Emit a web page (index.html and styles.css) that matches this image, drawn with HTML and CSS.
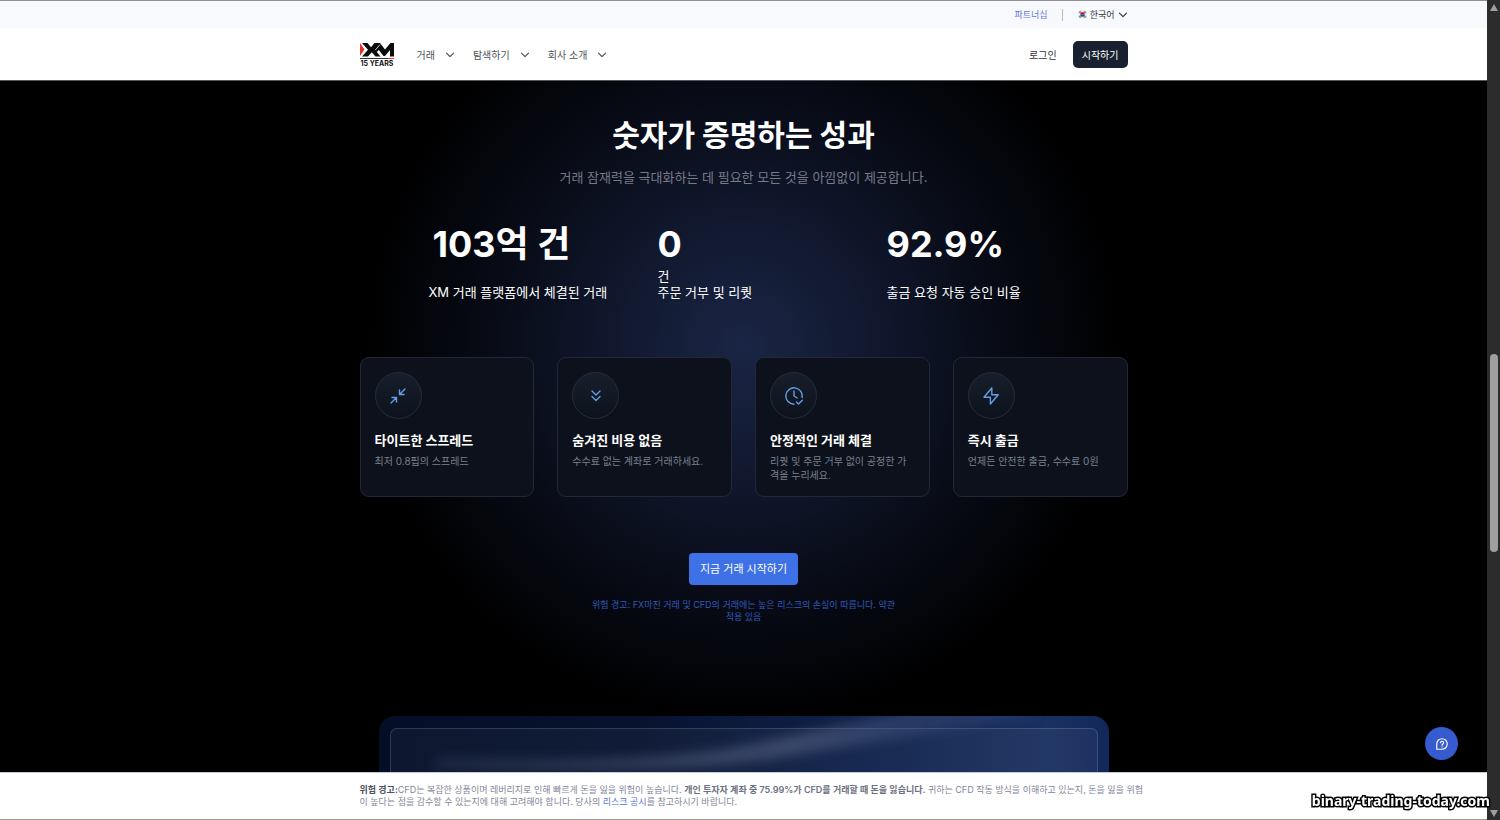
FILE: index.html
```
<!DOCTYPE html>
<html lang="ko">
<head>
<meta charset="utf-8">
<meta name="viewport" content="width=device-width, initial-scale=1">
<title>XM</title>
<link rel="stylesheet" href="styles.css">
</head>
<body>
<div class="page">
  <div class="topbar">
    <div class="container topbar-inner">
      <a class="partner" href="#">파트너십</a>
      <span class="divider"></span>
      <button class="language" type="button">
        <svg class="flag" viewBox="0 0 20 20" aria-hidden="true">
          <circle cx="10" cy="10" r="10" fill="#f0f0f0"/>
          <g stroke="#222" stroke-width="1.3"><path d="M2 6l3-4M3.6 7.2l3-4M5.2 8.4l3-4M12 4.4l3 4M13.500 3.200l3 4M15 2l3 4M2 14l3 4M3.600 12.800l3 4M5.200 11.600l3 4M12 15.600l3-4M13.500 16.800l3-4M15 18l3-4"/></g>
          <circle cx="10" cy="10" r="5" fill="#f0f0f0"/>
          <path d="M5 10a5 5 0 0 1 10 0z" fill="#d80027"/>
          <path d="M5 10a5 5 0 0 0 10 0z" fill="#0052b4"/>
        </svg>
        한국어
        <svg class="chevron" viewBox="0 0 10 10" aria-hidden="true"><path d="M1.500 3.200L5 6.700l3.500-3.500"/></svg>
      </button>
    </div>
  </div>

  <header class="header">
    <div class="container header-inner">
      <a class="logo" href="#" aria-label="XM">
        <svg class="logo-mark" viewBox="0 0 35 18" aria-hidden="true">
          <path d="M0 1l4.500 6.500L0 14z" fill="#e5322b"/>
          <path d="M2 1h5.500l3.500 4.200L14.500 1H20l5 6.500L30.500 1H34v13.500h-4V8l-5 6h-1.500L18.800 8l-2 2 3.700 4.500H15.500l-3.700-4.200L8 14.500H2l6-6.700z" fill="#0b0b0b"/>
          <path d="M15.200 8.200L20 2.500" fill="none" stroke="#fff" stroke-width=".8"/>
          <path d="M0 16.500h28" stroke="#333"/><path d="M28 16.500h6" stroke="#e5322b"/>
        </svg>
        <span class="logo-years">15 YEARS</span>
      </a>
      <nav class="nav">
        <button type="button">거래<svg class="chevron" viewBox="0 0 10 10" aria-hidden="true"><path d="M1.500 3.200L5 6.700l3.500-3.500"/></svg></button>
        <button type="button">탐색하기<svg class="chevron" viewBox="0 0 10 10" aria-hidden="true"><path d="M1.500 3.200L5 6.700l3.500-3.500"/></svg></button>
        <button type="button">회사 소개<svg class="chevron" viewBox="0 0 10 10" aria-hidden="true"><path d="M1.500 3.200L5 6.700l3.500-3.500"/></svg></button>
      </nav>
      <a class="login" href="#">로그인</a>
      <button class="start" type="button">시작하기</button>
    </div>
  </header>

  <main class="main">
    <div class="container">
      <h1 class="title">숫자가 증명하는 성과</h1>
      <p class="subtitle">거래 잠재력을 극대화하는 데 필요한 모든 것을 아낌없이 제공합니다.</p>

      <div class="stats">
        <div class="stat"><strong class="count">103억 건</strong><span class="label">XM 거래 플랫폼에서 체결된 거래</span></div>
        <div class="stat"><strong>0</strong><span>건</span><span class="label">주문 거부 및 리퀏</span></div>
        <div class="stat"><strong>92.9%</strong><span class="label">출금 요청 자동 승인 비율</span></div>
      </div>

      <div class="cards">
        <article class="card">
          <div class="card-icon"><svg viewBox="0 0 20 20" aria-hidden="true"><path d="M17 3L11.500 8.500M11.500 4v4.500H16M3 17l5.500-5.500M4 11.500h4.500V16"/></svg></div>
          <h2>타이트한 스프레드</h2>
          <p>최저 0.8핍의 스프레드</p>
        </article>
        <article class="card">
          <div class="card-icon"><svg viewBox="0 0 20 20" aria-hidden="true"><path d="M6 5l4 4 4-4M6 10.500l4 4 4-4"/></svg></div>
          <h2>숨겨진 비용 없음</h2>
          <p>수수료 없는 계좌로 거래하세요.</p>
        </article>
        <article class="card">
          <div class="card-icon"><svg viewBox="0 0 20 20" aria-hidden="true"><path d="M10 5v5l3.200 2M18.100 11.500a8.200 8.200 0 1 0-8.100 6.700M12.500 16l2 2 3.800-3.800"/></svg></div>
          <h2>안정적인 거래 체결</h2>
          <p>리퀏 및 주문 거부 없이 공정한 가격을 누리세요.</p>
        </article>
        <article class="card">
          <div class="card-icon"><svg viewBox="0 0 20 20" aria-hidden="true"><path d="M10.800 2L3 11.300h6.400V18l7.800-9.300h-6.400z"/></svg></div>
          <h2>즉시 출금</h2>
          <p>언제든 안전한 출금, 수수료 0원</p>
        </article>
      </div>

      <div class="cta">
        <button class="cta-button" type="button">지금 거래 시작하기</button>
        <p>위험 경고: FX마진 거래 및 CFD의 거래에는 높은 리스크의 손실이 따릅니다. 약관 적용 있음</p>
      </div>
    </div>

    <section class="promo">
      <svg class="promo-light" viewBox="0 0 730 56" preserveAspectRatio="none" aria-hidden="true">
        <defs>
          <filter id="soft" x="-20%" y="-100%" width="140%" height="300%"><feGaussianBlur stdDeviation="6"/></filter>
          <linearGradient id="beam" x1="0" x2="1">
            <stop offset="0" stop-color="#5a6685" stop-opacity=".15"/>
            <stop offset=".6" stop-color="#5a6685" stop-opacity=".42"/>
            <stop offset="1" stop-color="#3c5288" stop-opacity=".2"/>
          </linearGradient>
        </defs>
        <path d="M60 50Q300 56 400 38T660-4L560-8Q440 18 360 34T60 46z" fill="url(#beam)" stroke="url(#beam)" stroke-width="8" filter="url(#soft)"/>
      </svg>
      <div class="promo-inner"></div>
    </section>
  </main>

  <footer class="risk">
    <div class="container">
      <p><b class="lead">위험 경고:</b>CFD는 복잡한 상품이며 레버리지로 인해 빠르게 돈을 잃을 위험이 높습니다. <b>개인 투자자 계좌 중 75.99%가 CFD를 거래할 때 돈을 잃습니다.</b> 귀하는 CFD 작동 방식을 이해하고 있는지, 돈을 잃을 위험이 높다는 점을 감수할 수 있는지에 대해 고려해야 합니다. 당사의 <a href="#">리스크 공시</a>를 참고하시기 바랍니다.</p>
    </div>
  </footer>
</div>

<div class="scrollbar" aria-hidden="true">
  <span class="arrow up"></span>
  <span class="thumb"></span>
  <span class="arrow down"></span>
</div>

<button class="help" type="button" aria-label="도움말">
  <svg viewBox="0 0 20 20" aria-hidden="true"><path d="M2.500 17.500V10a7.500 7.500 0 1 1 7.500 7.500z"/><path d="M7.800 8.200a2.200 2.200 0 1 1 3.300 2c-.8.400-1.100.8-1.100 1.500M10 14v.300"/></svg>
</button>
<div class="watermark">binary-trading-today.com</div>
</body>
</html>
```
FILE: styles.css
```
* { box-sizing: border-box; margin: 0; }

body {
  display: flex;
  height: 100vh;
  overflow: hidden;
  background: #000;
  color: #fff;
  font: 10px/14px Inter, "Noto Sans CJK KR", sans-serif;
}

button {
  padding: 0;
  border: 0;
  background: none;
  color: inherit;
  font: inherit;
  cursor: pointer;
}

a { color: inherit; text-decoration: none; }

.page {
  flex: 1;
  min-width: 0;
  display: flex;
  flex-direction: column;
  border-top: 1px solid #8f9094;
  border-bottom: 1px solid #9a9b96;
}

.container {
  width: 100%;
  max-width: 768px;
  margin: 0 auto;
}

.chevron {
  width: 10px;
  height: 10px;
  fill: none;
  stroke: currentColor;
  stroke-width: 1.2;
  stroke-linecap: round;
  stroke-linejoin: round;
}

.topbar { background: #f8f9fc; }

.topbar-inner {
  display: flex;
  align-items: center;
  justify-content: flex-end;
  height: 27px;
  font-size: 9px;
}

.partner { color: #5b76dc; }

.divider {
  width: 1px;
  height: 12px;
  margin: 0 15px 0 14px;
  background: #b4bacb;
}

.language {
  display: flex;
  align-items: center;
  gap: 3px;
  color: #30343c;
}

.flag { width: 9px; height: 9px; }

.header {
  background: #fff;
  color: #4d525c;
  border-bottom: 1px solid #55565a;
}

.header-inner {
  display: flex;
  align-items: center;
  height: 52px;
  padding-top: 1px;
}

.logo { width: 35px; margin-right: 22px; color: #111; }
.logo-mark { display: block; width: 35px; height: 18px; }
.logo-years {
  display: block;
  font-size: 7px;
  line-height: 8px;
  font-weight: 700;
  white-space: nowrap;
  text-align: center;
}

.nav { display: flex; gap: 18px; flex: 1; }
.nav button { display: flex; align-items: center; gap: 10px; }

.login { margin-right: 16px; color: #30343c; }

.start {
  height: 27px;
  padding: 0 9px;
  border-radius: 5px;
  background: #192130;
  color: #fff;
}

.main {
  flex: 1;
  min-height: 0;
  overflow: hidden;
  padding-top: 35px;
  background: #000 radial-gradient(circle 380px at 50% 264px, #1a2545 0%, #10172c 37%, #080b16 67%, #000 100%);
}

.title {
  font-size: 30px;
  line-height: 38px;
  font-weight: 700;
  text-align: center;
}

.subtitle {
  margin-top: 13px;
  font-size: 13px;
  line-height: 20px;
  color: #777b88;
  text-align: center;
}

.stats {
  display: grid;
  grid-template-columns: repeat(3, 1fr);
  margin-top: 34px;
  padding: 0 12px 0 69px;
}

.stat {
  display: flex;
  flex-direction: column;
  font-size: 13px;
  line-height: 16px;
}

.stat strong {
  font-size: 36px;
  line-height: 46px;
  margin-bottom: 1px;
}

.stat .count { padding-left: 4px; }
.stat .label { margin-top: auto; }

.cards {
  display: grid;
  grid-template-columns: repeat(4, 1fr);
  gap: 23px;
  margin-top: 57px;
}

.card {
  padding: 14px;
  border: 1px solid #222838;
  border-radius: 9px;
  background: #0c111b;
}

.card-icon {
  display: grid;
  place-items: center;
  width: 47px;
  height: 47px;
  border: 1px solid #262d3b;
  border-radius: 50%;
  background: linear-gradient(#171f2c, #0d121c);
}

.card-icon svg {
  width: 20px;
  height: 20px;
  fill: none;
  stroke: #639fe6;
  stroke-width: 1.4;
  stroke-linecap: round;
  stroke-linejoin: round;
}

.card h2 {
  margin-top: 11px;
  font-size: 13px;
  line-height: 20px;
  font-weight: 700;
}

.card p { margin-top: 4px; color: #7b808c; }

.cta {
  display: flex;
  flex-direction: column;
  align-items: center;
  gap: 14px;
  margin-top: 56px;
}

.cta-button {
  height: 32px;
  padding: 0 11px;
  border-radius: 4px;
  background: #3e70e6;
  font-size: 11px;
}

.cta p {
  max-width: 310px;
  font-size: 9px;
  line-height: 12px;
  color: #3259ba;
  text-align: center;
}

.promo {
  position: relative;
  overflow: hidden;
  width: 95%;
  max-width: 730px;
  margin: 93px auto 0;
  padding: 12px 11px 0;
  border-radius: 16px 16px 0 0;
  background: linear-gradient(90deg, #040e27 0%, #07122f 35%, #10234d 70%, #1a3060 92%, #12285b 100%);
}

.promo-light {
  position: absolute;
  top: 0;
  left: 0;
  width: 100%;
  height: 56px;
}

.promo-inner {
  height: 300px;
  border: 1px solid #ffffff26;
  border-radius: 7px;
  background: #ffffff0a;
}

.risk {
  padding: 11px 0;
  border-top: 1px solid #c5c9d8;
  background: #fff;
  color: #82869a;
  font-size: 9px;
  line-height: 12px;
}

.risk p { margin-right: -20px; }
.risk b { font-weight: 600; color: #6b7080; }
.risk .lead { color: #4d525f; }
.risk a { color: #5570d8; }

.scrollbar {
  display: flex;
  flex-direction: column;
  align-items: center;
  width: 13px;
  padding: 4px 0 3px;
  background: #2c2c2c;
}

.arrow {
  border: 4px solid transparent;
  border-top: 0;
  border-bottom: 7px solid #9f9f9f;
}

.arrow.down { transform: rotate(180deg); margin-top: auto; }

.thumb {
  width: 8px;
  height: 198px;
  margin-top: 343px;
  border-radius: 4px;
  background: #9f9f9f;
}

.help {
  position: fixed;
  right: 42px;
  bottom: 60px;
  display: grid;
  place-items: center;
  width: 33px;
  height: 33px;
  border-radius: 50%;
  background: #365bce;
}

.help svg {
  width: 14px;
  height: 14px;
  fill: none;
  stroke: #fff;
  stroke-width: 1.700;
  stroke-linecap: round;
  stroke-linejoin: round;
}

.watermark {
  position: fixed;
  right: 10px;
  bottom: 10px;
  color: #fff;
  font: 700 14px/18px "Noto Sans", sans-serif;
  -webkit-text-stroke: 3px #000;
  paint-order: stroke fill;
}
```
